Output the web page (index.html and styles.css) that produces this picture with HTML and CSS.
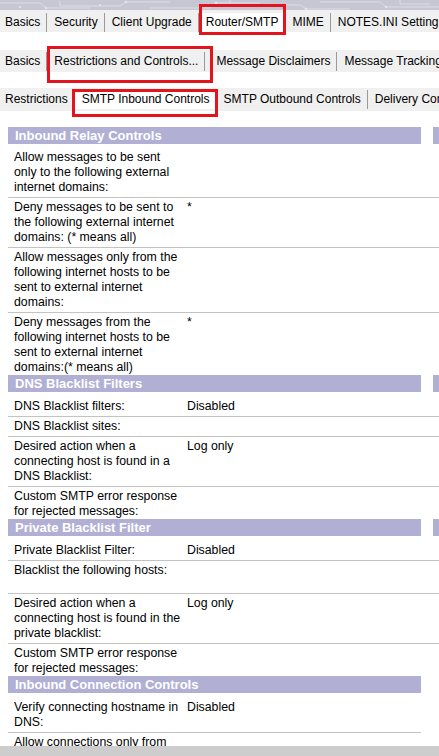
FILE: index.html
```html
<!DOCTYPE html>
<html lang="en">
<head>
<meta charset="utf-8">
<title>Router/SMTP - SMTP Inbound Controls</title>
<link rel="stylesheet" href="styles.css">
</head>
<body>
<div class="topstrip">
  <svg class="topstrip-art" width="439" height="10" viewBox="0 0 439 10" aria-hidden="true">
    <g fill="none" stroke="#dcdce7" stroke-width="1">
      <path d="M0 3 H40 L46 8 H90 M60 1 V6 H120 L126 2 H170"/>
      <path d="M150 8 H210 L216 3 H260 M230 0 V5 H300 L306 9 H350"/>
      <path d="M320 2 H380 L386 7 H439 M400 0 V4 H430"/>
    </g>
    <g fill="#e4e4ee">
      <circle cx="46" cy="8" r="1.2"/><circle cx="126" cy="2" r="1.2"/><circle cx="216" cy="3" r="1.2"/>
      <circle cx="306" cy="9" r="1.2"/><circle cx="386" cy="7" r="1.2"/><circle cx="100" cy="5" r="1"/>
      <circle cx="270" cy="6" r="1"/><circle cx="20" cy="7" r="1"/>
    </g>
  </svg>
</div>

<nav class="tabs tabs--primary">
  <span class="tab">Basics</span>
  <span class="tab">Security</span>
  <span class="tab">Client Upgrade</span>
  <span class="tab tab--active mark mark--a">Router/SMTP</span>
  <span class="tab">MIME</span>
  <span class="tab">NOTES.INI Settings</span>
</nav>

<nav class="tabs tabs--secondary">
  <span class="tab">Basics</span>
  <span class="tab mark mark--b">Restrictions and Controls...</span>
  <span class="tab tab--wide">Message Disclaimers</span>
  <span class="tab">Message Tracking</span>
</nav>

<nav class="tabs tabs--tertiary">
  <span class="tab">Restrictions</span>
  <span class="tab tab--active mark mark--c">SMTP Inbound Controls</span>
  <span class="tab">SMTP Outbound Controls</span>
  <span class="tab">Delivery Controls</span>
</nav>

<main class="content">
  <section class="section section--first">
    <div class="section-head">
      <h2 class="section-title">Inbound Relay Controls</h2>
      <div class="section-stub"></div>
    </div>
    <div class="section-body">
      <div class="row"><div class="label">Allow messages to be sent only to the following external internet domains:</div><div class="value"></div></div>
      <div class="row"><div class="label">Deny messages to be sent to the following external internet domains: (* means all)</div><div class="value">*</div></div>
      <div class="row"><div class="label">Allow messages only from the following internet hosts to be sent to external internet domains:</div><div class="value"></div></div>
      <div class="row"><div class="label">Deny messages from the following internet hosts to be sent to external internet domains:(* means all)</div><div class="value">*</div></div>
    </div>
  </section>

  <section class="section">
    <div class="section-head">
      <h2 class="section-title">DNS Blacklist Filters</h2>
      <div class="section-stub"></div>
    </div>
    <div class="section-body">
      <div class="row"><div class="label">DNS Blacklist filters:</div><div class="value">Disabled</div></div>
      <div class="row"><div class="label">DNS Blacklist sites:</div><div class="value"></div></div>
      <div class="row"><div class="label">Desired action when a connecting host is found in a DNS Blacklist:</div><div class="value">Log only</div></div>
      <div class="row"><div class="label">Custom SMTP error response for rejected messages:</div><div class="value"></div></div>
    </div>
  </section>

  <section class="section">
    <div class="section-head">
      <h2 class="section-title">Private Blacklist Filter</h2>
      <div class="section-stub"></div>
    </div>
    <div class="section-body">
      <div class="row"><div class="label">Private Blacklist Filter:</div><div class="value">Disabled</div></div>
      <div class="row row--tall"><div class="label">Blacklist the following hosts:</div><div class="value"></div></div>
      <div class="row"><div class="label">Desired action when a connecting host is found in the private blacklist:</div><div class="value">Log only</div></div>
      <div class="row"><div class="label">Custom SMTP error response for rejected messages:</div><div class="value"></div></div>
    </div>
  </section>

  <section class="section section--narrow">
    <div class="section-head">
      <h2 class="section-title">Inbound Connection Controls</h2>
    </div>
    <div class="section-body">
      <div class="row"><div class="label">Verify connecting hostname in DNS:</div><div class="value">Disabled</div></div>
      <div class="row"><div class="label">Allow connections only from the following SMTP internet hostnames/IP addresses:</div><div class="value"></div></div>
    </div>
  </section>
</main>

<div class="statusbar"></div>
</body>
</html>
```

FILE: styles.css
```css
html, body {
  margin: 0;
  padding: 0;
}

body {
  overflow: hidden;
  background: #ffffff;
  color: #000000;
  font-family: "Liberation Sans", Arial, sans-serif;
}

.topstrip {
  height: 10px;
  background: #c7c7d4;
  overflow: hidden;
}

.topstrip-art {
  display: block;
}

.tabs {
  display: flex;
  background: #f0f0f0;
  height: 22px;
  font-size: 12px;
  white-space: nowrap;
  box-sizing: border-box;
}

.tabs--primary {
  align-items: flex-end;
}

.tabs--secondary {
  margin-top: 18px;
  padding-top: 2px;
  align-items: flex-start;
}

.tabs--tertiary {
  margin-top: 16px;
  height: 23px;
  padding-top: 2px;
  align-items: flex-start;
}

.tab {
  position: relative;
  flex: none;
  height: 19px;
  line-height: 19px;
  padding: 0 6px 0 7px;
  border-right: 1px solid #9a9a9a;
}

.tab:first-child {
  padding-left: 5px;
}

.tab--active {
  background: #ffffff;
}

.tab--wide {
  padding-left: 11px;
}

.mark::after {
  content: "";
  position: absolute;
  z-index: 2;
  border: 3px solid #e3141c;
  pointer-events: none;
}

.mark--a::after {
  left: 0;
  right: -2px;
  top: -9px;
  bottom: -3px;
}

.mark--b::after {
  left: 0;
  right: -9px;
  top: -6px;
  bottom: -12px;
}

.mark--c::after {
  left: -3px;
  right: -2px;
  top: -1px;
  bottom: -8px;
}

.content {
  margin-top: 16px;
  padding-left: 8px;
  font-size: 12.3px;
  line-height: 15px;
}

.section-head {
  display: flex;
  height: 17px;
}

.section-title {
  margin: 0;
  width: 413px;
  flex: none;
  box-sizing: border-box;
  padding-left: 7px;
  background: #b1b0d4;
  color: #ffffff;
  font-size: 13px;
  font-weight: bold;
  line-height: 17px;
  white-space: nowrap;
}

.section-stub {
  flex: 1;
  margin-left: 12px;
  background: #b1b0d4;
}

.section-body {
  padding-top: 5px;
}

.section--first .section-body {
  padding-top: 4px;
}

.row {
  display: flex;
  padding: 2px 0 2px 6px;
  border-bottom: 1px solid #c3c3c3;
}

.row:last-child {
  border-bottom: 0;
  padding-bottom: 0;
}

.section--narrow .row {
  width: 413px;
  box-sizing: border-box;
}

.label {
  width: 173px;
  flex: none;
  box-sizing: border-box;
  padding-right: 6px;
}

.value {
  flex: 1;
}

.row--tall .label {
  min-height: 28px;
}

.statusbar {
  position: fixed;
  left: 0;
  right: 0;
  bottom: 0;
  height: 10px;
  background: #cdcdcd;
}
```
